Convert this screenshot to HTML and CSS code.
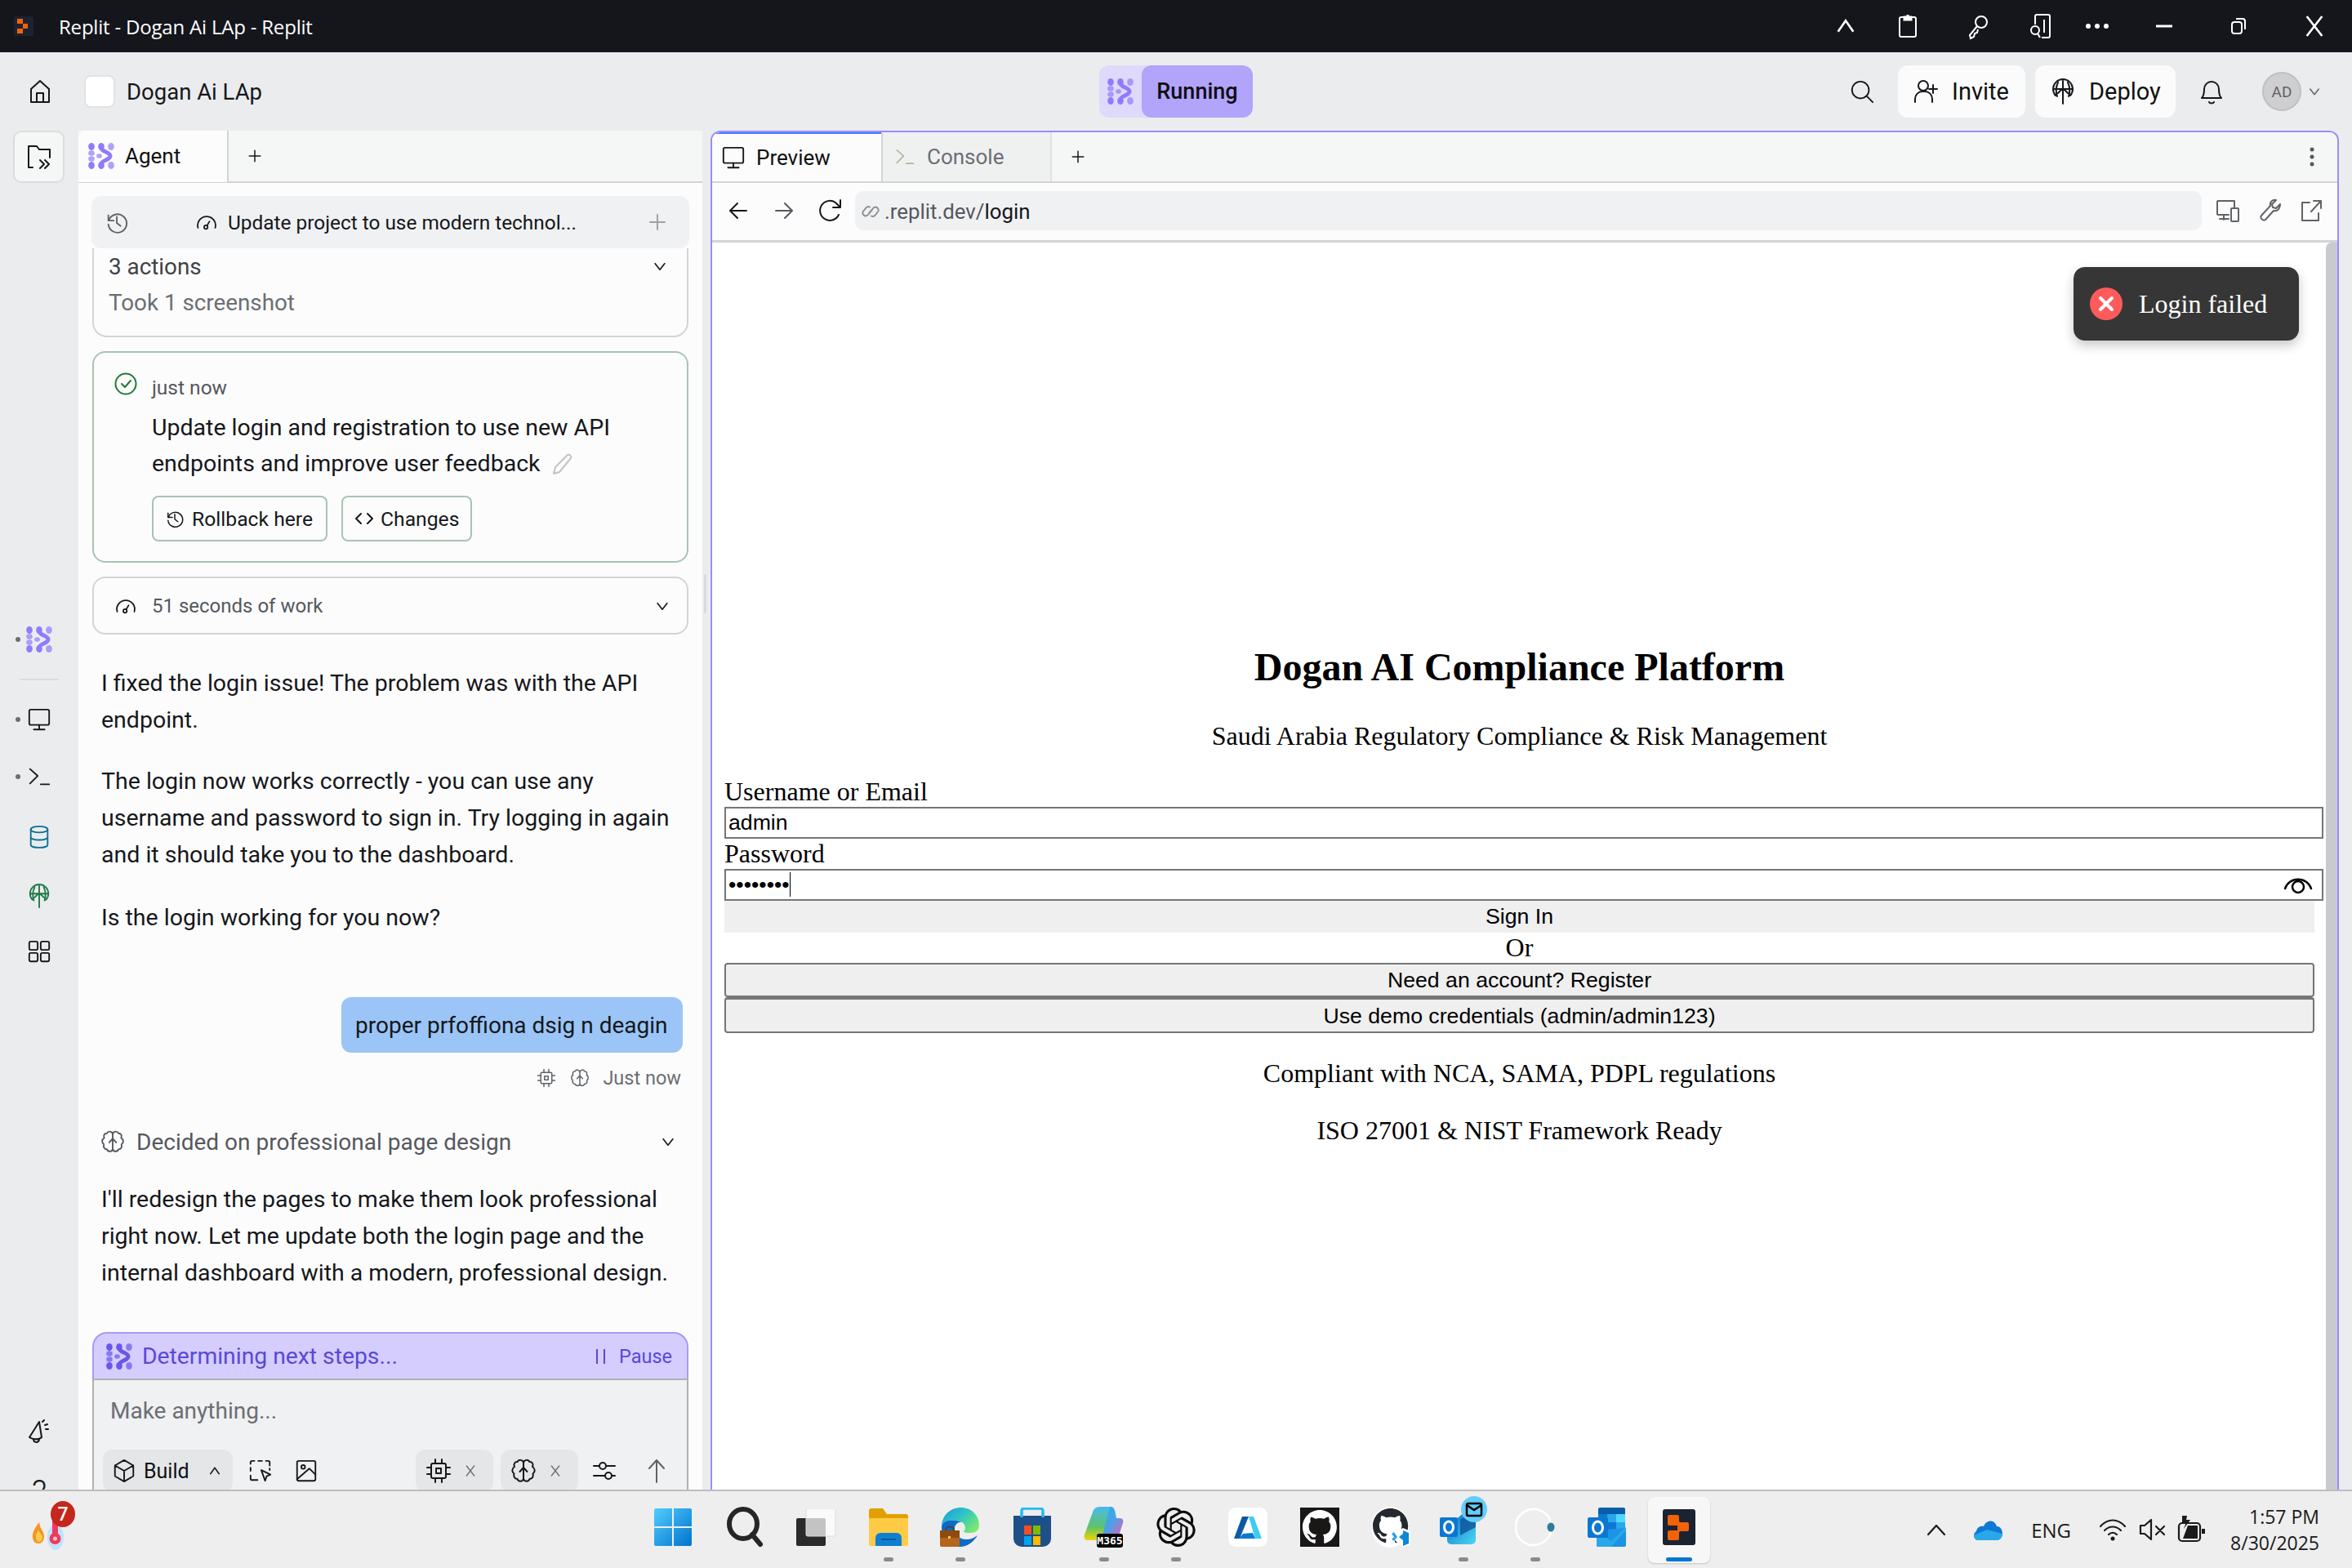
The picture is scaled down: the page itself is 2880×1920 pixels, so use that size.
FILE: index.html
```html
<!DOCTYPE html>
<html lang="en">
<head>
<meta charset="utf-8">
<title>Replit - Dogan Ai LAp - Replit</title>
<link rel="stylesheet" href="styles.css">
</head>
<body>
<svg class="defs" width="0" height="0">
  <defs>
    <symbol id="agent" viewBox="0 0 32 32">
      <ellipse cx="4" cy="4.500" rx="3.800" ry="4.500"/><ellipse cx="16" cy="4.500" rx="3.800" ry="4.500"/><ellipse cx="28" cy="4.500" rx="3.800" ry="4.500" opacity=".7"/>
      <ellipse cx="4" cy="12.500" rx="3.800" ry="3.200" opacity=".7"/><ellipse cx="4" cy="19.500" rx="3.800" ry="3.200" opacity=".7"/>
      <ellipse cx="13.500" cy="16" rx="3.400" ry="2.800" opacity=".7"/>
      <path d="M16 6c0 5 11 5 11 10s-11 5-11 10" fill="none" stroke="currentColor" stroke-width="5"/>
      <ellipse cx="4" cy="27.500" rx="3.800" ry="4.500"/><ellipse cx="16" cy="27.500" rx="3.800" ry="4.500"/><ellipse cx="28" cy="27.500" rx="3.800" ry="4.500" opacity=".7"/>
    </symbol>
    <symbol id="chev" viewBox="0 0 24 24"><path d="M5 8l7 9 7-9"/></symbol>
    <symbol id="chevup" viewBox="0 0 24 24"><path d="M5 17l7-10 7 10"/></symbol>
    <symbol id="plus" viewBox="0 0 24 24"><path d="M12 3v18M3 12h18"/></symbol>
    <symbol id="x" viewBox="0 0 24 24"><path d="M5 3l14 18M19 3L5 21"/></symbol>
    <symbol id="gauge" viewBox="0 0 32 32"><path d="M4 24a12.500 12.500 0 1 1 24 0"/><circle cx="15" cy="23" r="2.500"/><path d="M16.500 21L20 15"/></symbol>
    <symbol id="brain" viewBox="0 0 32 32"><path d="M16 6c-.5-3.500-6-4.500-7.500-1C5 5 3.500 8 5 11c-3.500 2-3.500 6.500-.5 8.500C3.500 23 5 26 8.500 26c1 3.500 6.500 3.500 7.500 0 1 3.500 6.500 3.500 7.500 0 3.500 0 5-3 4-6.500 3-2 3-6.500-.5-8.500 1.500-3 0-6-3.500-6-1.500-3.500-7-2.500-7.500 1z"/><path d="M16 6v20M11.500 17l4.500-5 4.500 5"/></symbol>
    <symbol id="chip" viewBox="0 0 32 32"><rect x="7" y="7" width="18" height="18" rx="2"/><rect x="13" y="13" width="6" height="6"/><path d="M12 2v5M20 2v5M12 25v5M20 25v5M2 12h5M2 20h5M25 12h5M25 20h5"/></symbol>
    <symbol id="monitor" viewBox="0 0 32 32"><rect x="3" y="3" width="26" height="20" rx="2"/><path d="M16 23v6M9 29h14"/></symbol>
    <symbol id="term" viewBox="0 0 32 32"><path d="M4 6l10 9-10 10M18 26h11"/></symbol>
    <symbol id="deploy" viewBox="0 0 32 32"><path d="M7 21a12 12 0 1 1 18 0M16 3v28M4 13h24M10 5c-3 6-3 11-1 17M22 5c3 6 3 11 1 17M10 18l6-6 6 6"/></symbol>
    <symbol id="clock" viewBox="0 0 32 32"><path d="M5 7v7h7"/><path d="M5.500 14A12 12 0 1 1 5 19"/><path d="M16 9v8l5 4"/></symbol>
  </defs>
</svg>

<header class="titlebar">
  <svg class="app-mark" width="24" height="24" viewBox="0 0 24 24"><rect width="24" height="24" rx="3" fill="#1b2232"/><path d="M4 3h7v6h6v6h-6v6H4v-6h7V9H4z" fill="#f26207"/></svg>
  <span class="title-text">Replit - Dogan Ai LAp - Replit</span>
  <div class="win-controls">
    <svg class="win-ico" width="32" height="32"><use href="#chevup"/></svg>
    <svg class="win-ico" width="32" height="32" viewBox="0 0 32 32"><rect x="6" y="5" width="20" height="24" rx="2"/><path d="M12 5h8v3h-8zM16 2v3" stroke-width="3"/></svg>
    <svg class="win-ico" width="32" height="32" viewBox="0 0 32 32"><circle cx="20" cy="11" r="7"/><path d="M15 16L6 27l1 4 4-2 1-4 3-1 1-4"/></svg>
    <svg class="win-ico" width="32" height="32" viewBox="0 0 32 32"><path d="M9 14V4a2 2 0 0 1 2-2h14a2 2 0 0 1 2 2v24a2 2 0 0 1-2 2H17"/><path d="M20 8v16"/><circle cx="9" cy="21" r="5"/><path d="M12 25l3 5"/></svg>
    <svg class="win-ico win-ico--fill" width="32" height="32" viewBox="0 0 32 32"><circle cx="5" cy="16" r="3"/><circle cx="16" cy="16" r="3"/><circle cx="27" cy="16" r="3"/></svg>
    <svg class="win-ico" width="32" height="32" viewBox="0 0 32 32"><path d="M6 16h20" stroke-width="3"/></svg>
    <svg class="win-ico" width="32" height="32" viewBox="0 0 32 32"><rect x="8" y="11" width="12" height="14" rx="3"/><path d="M13 7h8a3 3 0 0 1 3 3v10"/></svg>
    <svg class="win-ico" width="32" height="32"><use href="#x"/></svg>
  </div>
</header>

<nav class="topbar">
  <svg class="ico ico--home" width="32" height="32" viewBox="0 0 32 32"><path d="M5 29V13L16 3l11 10v16z"/><path d="M12 29V18h8v11"/></svg>
  <div class="project-badge"></div>
  <span class="project-name">Dogan Ai LAp</span>
  <div class="run-pill">
    <span class="run-logo"><svg class="agent-mark" width="32" height="32"><use href="#agent"/></svg></span>
    <span class="run-label">Running</span>
  </div>
  <svg class="ico ico--search" width="30" height="30" viewBox="0 0 32 32"><circle cx="14" cy="14" r="11"/><path d="M22 22l8 8"/></svg>
  <button class="top-btn top-btn--invite">
    <svg class="ico" width="32" height="32" viewBox="0 0 32 32"><circle cx="13" cy="9" r="6"/><path d="M3 29v-4a9 9 0 0 1 9-9h3a9 9 0 0 1 9 9v4M25 8v10M20 13h10"/></svg>
    Invite
  </button>
  <button class="top-btn top-btn--deploy">
    <svg class="ico" width="32" height="32"><use href="#deploy"/></svg>
    Deploy
  </button>
  <svg class="ico ico--bell" width="30" height="32" viewBox="0 0 30 32"><path d="M3 24c3-3 3-7 3-11a9 9 0 0 1 18 0c0 4 0 8 3 11z"/><path d="M12 29c1 2 5 2 6 0"/></svg>
  <div class="avatar">AD</div>
  <svg class="ico ico--caret" width="18" height="18"><use href="#chev"/></svg>
</nav>

<div class="workspace">
  <aside class="rail">
    <div class="rail-tool"><svg class="ico" width="32" height="32" viewBox="0 0 32 32"><path d="M8 29H3V3h10l3 4h13v10"/><path d="M17 20l5 5-5 5M23 20l5 5-5 5"/></svg></div>
    <div class="rail-item rail-item--dot rail-item--agent"><svg class="agent-mark" width="32" height="32"><use href="#agent"/></svg></div>
    <div class="rail-sep"></div>
    <div class="rail-item rail-item--dot rail-item--monitor"><svg class="ico" width="30" height="30"><use href="#monitor"/></svg></div>
    <div class="rail-item rail-item--dot rail-item--term"><svg class="ico" width="30" height="30"><use href="#term"/></svg></div>
    <div class="rail-item rail-item--teal"><svg class="ico" width="28" height="30" viewBox="0 0 28 32"><ellipse cx="14" cy="6" rx="11" ry="4"/><path d="M3 6v20c0 5 22 5 22 0V6M3 16c0 5 22 5 22 0"/></svg></div>
    <div class="rail-item rail-item--green"><svg class="ico" width="30" height="30"><use href="#deploy"/></svg></div>
    <div class="rail-item rail-item--grid"><svg class="ico" width="30" height="30" viewBox="0 0 32 32"><rect x="3" y="3" width="11" height="11" rx="2"/><rect x="18" y="3" width="11" height="11" rx="2"/><rect x="3" y="18" width="11" height="11" rx="2"/><rect x="18" y="18" width="11" height="11" rx="2"/></svg></div>
    <div class="rail-item rail-item--notice"><svg class="ico" width="32" height="32" viewBox="0 0 32 32"><path d="M16 4L4 23c4 3 12 3 15 0z"/><path d="M9 25c0 5 6 5 7 1M20 4l2-2M23 8l3-1M24 13l3 0"/></svg></div>
    <div class="rail-item rail-item--help"><span>?</span></div>
  </aside>

  <section class="agent">
    <div class="tabs">
      <div class="tab tab--agent"><svg class="agent-mark" width="32" height="32"><use href="#agent"/></svg>Agent</div>
      <svg class="ico ico--newtab" width="18" height="18"><use href="#plus"/></svg>
    </div>
    <div class="agent-body">
      <div class="thread-head">
        <svg class="ico ico--grey" width="30" height="30"><use href="#clock"/></svg>
        <svg class="ico ico--gauge" width="28" height="28"><use href="#gauge"/></svg>
        <span class="thread-title">Update project to use modern technol...</span>
        <svg class="ico ico--faint" width="24" height="24"><use href="#plus"/></svg>
      </div>
      <div class="card card--actions">
        <div class="actions-row"><span>3 actions</span><svg class="ico" width="20" height="20"><use href="#chev"/></svg></div>
        <div class="actions-sub">Took 1 screenshot</div>
      </div>
      <div class="card card--check">
        <div class="check-time">
          <svg class="check-ico" width="28" height="28" viewBox="0 0 28 28"><circle cx="14" cy="14" r="12.500"/><path d="M9 14l4 4 7-8"/></svg>
          just now
        </div>
        <div class="check-msg">Update login and registration to use new API<br>endpoints and improve user feedback <svg class="ico ico--pencil" width="28" height="28" viewBox="0 0 28 28"><path d="M3 26l2-8L20 3c2-1 5 1 4 4L10 24z"/></svg></div>
        <div class="check-btns">
          <button class="ghost-btn"><svg class="ico" width="24" height="24"><use href="#clock"/></svg>Rollback here</button>
          <button class="ghost-btn ghost-btn--code"><svg class="ico" width="24" height="24" viewBox="0 0 24 24"><path d="M8 6l-6 6 6 6M16 6l6 6-6 6"/></svg>Changes</button>
        </div>
      </div>
      <div class="card card--work">
        <svg class="ico" width="28" height="28"><use href="#gauge"/></svg>
        <span class="work-text">51 seconds of work</span>
        <svg class="ico ico--end" width="20" height="20"><use href="#chev"/></svg>
      </div>
      <p class="msg msg--first">I fixed the login issue! The problem was with the API<br>endpoint.</p>
      <p class="msg">The login now works correctly - you can use any<br>username and password to sign in. Try logging in again<br>and it should take you to the dashboard.</p>
      <p class="msg msg--ask">Is the login working for you now?</p>
      <div class="bubble-row"><div class="bubble">proper prfoffiona dsig n deagin</div></div>
      <div class="meta">
        <svg class="ico ico--meta" width="24" height="24"><use href="#chip"/></svg>
        <svg class="ico ico--meta" width="24" height="24"><use href="#brain"/></svg>
        <span>Just now</span>
      </div>
      <div class="decided">
        <svg class="ico ico--brain2" width="30" height="30"><use href="#brain"/></svg>
        <span>Decided on professional page design</span>
        <svg class="ico ico--end" width="20" height="20"><use href="#chev"/></svg>
      </div>
      <p class="msg msg--plan">I'll redesign the pages to make them look professional<br>right now. Let me update both the login page and the<br>internal dashboard with a modern, professional design.</p>
      <div class="composer">
        <div class="status">
          <svg class="agent-mark agent-mark--deep" width="32" height="32"><use href="#agent"/></svg>
          <span class="status-text">Determining next steps...</span>
          <span class="pause"><i class="pause-bars"></i>Pause</span>
        </div>
        <div class="input-box">
          <div class="placeholder">Make anything...</div>
          <div class="input-tools">
            <div class="pill pill--build">
              <svg class="ico" width="28" height="30" viewBox="0 0 28 32"><path d="M14 2l12 7v14l-12 7-12-7V9zM2 9l12 7 12-7M14 16v14"/></svg>
              <span>Build</span>
              <svg class="ico ico--up" width="18" height="18"><use href="#chevup"/></svg>
            </div>
            <svg class="ico ico--tool ico--select" width="30" height="30" viewBox="0 0 32 32"><path d="M12 28H5a2 2 0 0 1-2-2v-4M3 16v-4M3 7V5a2 2 0 0 1 2-2h3M13 3h5M23 3h3a2 2 0 0 1 2 2v4M28 13v2"/><path class="solid" d="M17 15l12 6-5 2-2 6z"/></svg>
            <svg class="ico ico--tool" width="28" height="30" viewBox="0 0 28 32"><rect x="2" y="3" width="24" height="26" rx="2"/><circle cx="10" cy="11" r="2.500"/><path d="M2 27l16-14 8 8"/></svg>
            <div class="pill pill--chip"><svg class="ico" width="32" height="32"><use href="#chip"/></svg><svg class="ico ico--closex" width="16" height="18"><use href="#x"/></svg></div>
            <div class="pill pill--brain"><svg class="ico" width="32" height="32"><use href="#brain"/></svg><svg class="ico ico--closex" width="16" height="18"><use href="#x"/></svg></div>
            <svg class="ico ico--sliders" width="28" height="28" viewBox="0 0 28 28"><path d="M1 8h7M16 8h11M1 20h14M23 20h4"/><circle cx="12" cy="8" r="4"/><circle cx="19" cy="20" r="4"/></svg>
            <svg class="ico ico--send" width="24" height="32" viewBox="0 0 24 32"><path d="M12 30V3M3 13l9-10 9 10"/></svg>
          </div>
        </div>
      </div>
    </div>
  </section>

  <div class="splitter"><i></i></div>

  <section class="main">
    <div class="tabs tabs--main">
      <div class="tab tab--preview"><svg class="ico" width="30" height="30"><use href="#monitor"/></svg>Preview</div>
      <div class="tab tab--console"><svg class="ico ico--dim" width="26" height="26"><use href="#term"/></svg>Console</div>
      <svg class="ico ico--newtab2" width="18" height="18"><use href="#plus"/></svg>
      <svg class="ico-kebab" width="6" height="24" viewBox="0 0 6 24"><circle cx="3" cy="3" r="2.500"/><circle cx="3" cy="12" r="2.500"/><circle cx="3" cy="21" r="2.500"/></svg>
    </div>
    <div class="url-row">
      <svg class="ico ico--nav" width="24" height="24" viewBox="0 0 24 24"><path d="M22 12H3M11 3l-9 9 9 9"/></svg>
      <svg class="ico ico--nav2" width="24" height="24" viewBox="0 0 24 24"><path d="M2 12h19M13 3l9 9-9 9"/></svg>
      <svg class="ico ico--nav3" width="30" height="30" viewBox="0 0 30 30"><path d="M25 20A12 12 0 1 1 21 5l5 5M27 2v9h-9"/></svg>
      <div class="url-box">
        <svg class="ico ico--link" width="22" height="24" viewBox="0 0 24 24"><path d="M10 14l6-7a4 4 0 0 1 6 5l-4 5a4 4 0 0 1-5 1M14 10l-6 7a4 4 0 0 1-6-5l4-5a4 4 0 0 1 5-1"/></svg>
        <span class="url-host">.replit.dev/</span><span class="url-path">login</span>
      </div>
      <svg class="ico ico--grey ico--urlt" width="30" height="28" viewBox="0 0 30 28"><path d="M16 19H3a1 1 0 0 1-1-1V3a1 1 0 0 1 1-1h20v9M10 19v6M5 24h11"/><rect x="19" y="11" width="9" height="16" rx="1"/></svg>
      <svg class="ico ico--grey ico--urlt2" width="28" height="28" viewBox="0 0 28 28"><path d="M26 6l-5 5-4-1-1-4 5-5c-4-1-8 2-7 7L3 20c-2 3 2 7 5 5l10-11c5 1 8-3 8-8z"/></svg>
      <svg class="ico ico--grey ico--urlt3" width="28" height="28" viewBox="0 0 28 28"><path d="M12 4H3v22h20v-9M14 15L26 2M17 2h9v9"/></svg>
    </div>
    <div class="viewport">
      <div class="page">
        <h1 class="page-title">Dogan AI Compliance Platform</h1>
        <p class="page-sub">Saudi Arabia Regulatory Compliance &amp; Risk Management</p>
        <form class="login">
          <div class="label">Username or Email</div>
          <div class="field">admin</div>
          <div class="label">Password</div>
          <div class="field field--pw">••••••••<i class="caret"></i>
            <svg class="eye" width="36" height="26" viewBox="0 0 36 26"><path d="M2 18a17 17 0 0 1 32 0"/><ellipse cx="18" cy="16" rx="7" ry="7"/></svg>
          </div>
          <button type="button" class="btn btn--primary">Sign In</button>
          <div class="or">Or</div>
          <button type="button" class="btn btn--outline">Need an account? Register</button>
          <button type="button" class="btn btn--outline btn--demo">Use demo credentials (admin/admin123)</button>
        </form>
        <p class="note note--first">Compliant with NCA, SAMA, PDPL regulations</p>
        <p class="note">ISO 27001 &amp; NIST Framework Ready</p>
      </div>
      <div class="toast">
        <svg class="toast-ico" width="40" height="40" viewBox="0 0 40 40"><circle cx="20" cy="20" r="20" fill="#ff5b5b"/><path d="M13 13l14 14M27 13L13 27" stroke="#fff" stroke-width="4" stroke-linecap="round"/></svg>
        <span>Login failed</span>
      </div>
      <div class="scrollbar"></div>
    </div>
  </section>
</div>

<footer class="taskbar">
  <div class="widget">
    <svg width="60" height="62" viewBox="0 0 60 62">
      <ellipse cx="30" cy="44" rx="10" ry="16" fill="#bfe3fb"/>
      <rect x="26" y="14" width="7" height="30" rx="3" fill="#ef3a5d"/><circle cx="29.500" cy="46" r="7" fill="#ef3a5d"/><circle cx="29.500" cy="46" r="2.500" fill="#ffc0cb"/>
      <path d="M10 26c-6 8-8 12-8 17 0 6 3 9 7 9s7-3 7-9c0-6-5-8-6-17z" fill="#f7941d"/><path d="M9 36c-3 4-3 6-3 8 0 3 2 6 4 6s4-3 4-6c0-3-3-4-5-8z" fill="#ffcd4d"/>
      <ellipse cx="39" cy="16" rx="15" ry="16" fill="#c4271c"/>
      <text x="39" y="24" class="badge-num">7</text>
    </svg>
  </div>
  <div class="dock">
    <div class="dock-item">
      <svg width="46" height="46" viewBox="0 0 46 46"><defs><linearGradient id="win" x1="0" y1="0" x2="1" y2="1"><stop offset="0" stop-color="#52cdfb"/><stop offset="1" stop-color="#0073cf"/></linearGradient></defs><path fill="url(#win)" d="M2 0h20v22H0V2a2 2 0 0 1 2-2zM24 0h20a2 2 0 0 1 2 2v20H24zM0 24h22v22H2a2 2 0 0 1-2-2zM24 24h22v20a2 2 0 0 1-2 2H24z"/></svg>
    </div>
    <div class="dock-item">
      <svg width="46" height="50" viewBox="0 0 46 50"><ellipse cx="21" cy="21" rx="17" ry="18" fill="none" stroke="#262626" stroke-width="6"/><path d="M32 34l10 12" stroke="#262626" stroke-width="6" stroke-linecap="round"/></svg>
    </div>
    <div class="dock-item">
      <svg width="50" height="46" viewBox="0 0 50 46"><rect x="0" y="12" width="36" height="34" rx="2" fill="#2a2a2a"/><rect x="12" y="0" width="36" height="34" rx="2" fill="#fff" fill-opacity=".72" stroke="#ddd"/></svg>
    </div>
    <div class="dock-item dock-item--open">
      <svg width="48" height="46" viewBox="0 0 48 46"><path d="M0 3a3 3 0 0 1 3-3h14l5 7h23a3 3 0 0 1 3 3v4H0z" fill="#e0a100"/><path d="M0 12h48v32a2 2 0 0 1-2 2H2a2 2 0 0 1-2-2z" fill="#ffcb47" /><path d="M8 46V36a6 6 0 0 1 6-6h20a6 6 0 0 1 6 6v10z" fill="#0f7fd1"/><path d="M15 38h18" stroke="#055b9e" stroke-width="2"/></svg>
    </div>
    <div class="dock-item dock-item--open">
      <svg width="50" height="48" viewBox="0 0 50 48"><defs><linearGradient id="edge" x1="0" y1="0" x2="1" y2=".7"><stop offset="0" stop-color="#1a9bd8"/><stop offset=".5" stop-color="#2cc3c7"/><stop offset="1" stop-color="#7bea6b"/></linearGradient></defs><path d="M2 24C2 10 12 0 26 0c12 0 22 9 22 22 0 6-5 9-10 9-5 0-8 0-9-2 3-2 3-8-2-11C18 14 2 14 2 24z" fill="url(#edge)"/><path d="M2 24c0-10 16-10 25-6-4-1-9 2-9 8 0 7 6 13 14 13 6 0 10-2 14-5-5 8-12 14-22 14C12 48 2 38 2 24z" fill="#0c6bc5"/><rect x="0" y="28" width="24" height="20" rx="2" fill="#b5661b"/><rect x="0" y="28" width="24" height="9" fill="#8d4b10"/><rect x="10" y="35" width="3" height="3" fill="#ffc83d"/><path d="M7 28c0-6 10-6 10 0" fill="none" stroke="#444" stroke-width="2"/></svg>
    </div>
    <div class="dock-item">
      <svg width="46" height="48" viewBox="0 0 46 48"><path d="M0 10h46v28a10 10 0 0 1-10 10H10A10 10 0 0 1 0 38z" fill="#1e4f88"/><path d="M10 12V4a3 3 0 0 1 3-3h20a3 3 0 0 1 3 3v8" fill="none" stroke="#25b9f5" stroke-width="3.500"/><rect x="13" y="22" width="9" height="11" fill="#f25022"/><rect x="24" y="22" width="9" height="11" fill="#7fba00"/><rect x="13" y="35" width="9" height="11" fill="#00a4ef"/><rect x="24" y="35" width="9" height="11" fill="#ffb900"/></svg>
    </div>
    <div class="dock-item dock-item--open">
      <svg width="50" height="50" viewBox="0 0 50 50"><defs><linearGradient id="cop" x1="0" y1="0" x2="1" y2="1"><stop offset="0" stop-color="#18b6e6"/><stop offset=".5" stop-color="#4f9fe8"/><stop offset="1" stop-color="#e85db0"/></linearGradient><linearGradient id="cop2" x1="0" y1="0" x2="0" y2="1"><stop offset="0" stop-color="#4bb9ee"/><stop offset=".6" stop-color="#5cc46a"/><stop offset="1" stop-color="#f4d400"/></linearGradient></defs><path d="M12 4c2-3 4-4 8-4h14l-9 34c-1 4-4 7-8 7H4c-3 0-4-3-3-7z" fill="url(#cop2)"/><path d="M32 0c5 0 6 2 8 14h4c4 0 5 3 4 6l-6 18H22l8-30z" fill="url(#cop)"/><rect x="16" y="33" width="32" height="17" rx="3" fill="#000"/><text x="32" y="46" class="m365">M365</text></svg>
    </div>
    <div class="dock-item dock-item--open">
      <svg width="48" height="48" viewBox="0 0 24 24" fill="#0c0c0c"><path d="M22.2819 9.8211a5.9847 5.9847 0 0 0-.5157-4.9108 6.0462 6.0462 0 0 0-6.5098-2.9A6.0651 6.0651 0 0 0 4.9807 4.1818a5.9847 5.9847 0 0 0-3.9977 2.9 6.0462 6.0462 0 0 0 .7427 7.0966 5.98 5.98 0 0 0 .511 4.9107 6.051 6.051 0 0 0 6.5146 2.9001A5.9847 5.9847 0 0 0 13.2599 24a6.0557 6.0557 0 0 0 5.7718-4.2058 5.9894 5.9894 0 0 0 3.9977-2.9001 6.0557 6.0557 0 0 0-.7475-7.0729zm-9.022 12.6081a4.4755 4.4755 0 0 1-2.8764-1.0408l.1419-.0804 4.7783-2.7582a.7948.7948 0 0 0 .3927-.6813v-6.7369l2.02 1.1686a.071.071 0 0 1 .038.052v5.5826a4.504 4.504 0 0 1-4.4945 4.4944zm-9.6607-4.1254a4.4708 4.4708 0 0 1-.5346-3.0137l.142.0852 4.783 2.7582a.7712.7712 0 0 0 .7806 0l5.8428-3.3685v2.3324a.0804.0804 0 0 1-.0332.0615L9.74 19.9502a4.4992 4.4992 0 0 1-6.1408-1.6464zM2.3408 7.8956a4.485 4.485 0 0 1 2.3655-1.9728V11.6a.7664.7664 0 0 0 .3879.6765l5.8144 3.3543-2.0201 1.1685a.0757.0757 0 0 1-.071 0l-4.8303-2.7865A4.504 4.504 0 0 1 2.3408 7.872zm16.5963 3.8558L13.1038 8.364 15.1192 7.2a.0757.0757 0 0 1 .071 0l4.8303 2.7913a4.4944 4.4944 0 0 1-.6765 8.1042v-5.6772a.79.79 0 0 0-.407-.667zm2.0107-3.0231l-.142-.0852-4.7735-2.7818a.7759.7759 0 0 0-.7854 0L9.409 9.2297V6.8974a.0662.0662 0 0 1 .0284-.0615l4.8303-2.7866a4.4992 4.4992 0 0 1 6.6802 4.66zM8.3065 12.863l-2.02-1.1638a.0804.0804 0 0 1-.038-.0567V6.0742a4.4992 4.4992 0 0 1 7.3757-3.4537l-.142.0805L8.704 5.459a.7948.7948 0 0 0-.3927.6813zm1.0976-2.3654l2.602-1.4998 2.6069 1.4998v2.9994l-2.5974 1.4997-2.6067-1.4997Z"/></svg>
    </div>
    <div class="dock-item">
      <svg width="48" height="48" viewBox="0 0 48 48"><rect width="48" height="48" rx="9" fill="#fff"/><defs><linearGradient id="az" x1="0" y1="0" x2="1" y2="1"><stop offset="0" stop-color="#114a8b"/><stop offset="1" stop-color="#0669bc"/></linearGradient></defs><path d="M17 11h8L14 38H7z" fill="url(#az)"/><path d="M25 11h6l10 27H33z" fill="#3ccbf4"/><path d="M18 32l12-1 3 7H13z" fill="#0a7ad1"/></svg>
    </div>
    <div class="dock-item">
      <svg width="48" height="48" viewBox="0 0 48 48"><rect width="48" height="48" fill="#1a1717"/><g transform="translate(3 3) scale(2.620)"><path class="gh-disc" d="M8 0C3.580 0 0 3.580 0 8c0 3.540 2.290 6.530 5.470 7.590.400.070.550-.170.550-.380 0-.190-.010-.820-.010-1.490-2.010.370-2.530-.490-2.690-.940-.090-.230-.480-.940-.820-1.130-.280-.150-.680-.520-.010-.530.630-.010 1.080.580 1.230.820.720 1.210 1.870.870 2.330.660.070-.520.280-.870.510-1.070-1.780-.200-3.640-.890-3.640-3.950 0-.870.310-1.590.820-2.150-.080-.200-.360-1.020.080-2.120 0 0 .670-.210 2.200.820.640-.180 1.320-.270 2-.270.680 0 1.360.090 2 .270 1.530-1.040 2.200-.820 2.200-.820.440 1.100.160 1.920.080 2.120.510.560.820 1.270.820 2.150 0 3.070-1.870 3.750-3.650 3.950.290.250.540.730.540 1.480 0 1.070-.010 1.930-.010 2.200 0 .210.150.460.550.380A8.013 8.013 0 0016 8c0-4.420-3.580-8-8-8z"/></g></svg>
    </div>
    <div class="dock-item">
      <svg width="48" height="50" viewBox="0 0 48 50"><ellipse cx="22" cy="25" rx="23" ry="25" fill="#fff"/><g transform="translate(1 2) scale(2.700)"><path class="gh-dark" d="M8 0C3.580 0 0 3.580 0 8c0 3.540 2.290 6.530 5.470 7.590.400.070.550-.170.550-.380 0-.190-.010-.820-.010-1.490-2.010.370-2.530-.490-2.690-.940-.090-.230-.480-.940-.820-1.130-.280-.150-.680-.520-.010-.530.630-.010 1.080.580 1.230.820.720 1.210 1.870.870 2.330.660.070-.520.280-.870.510-1.070-1.780-.200-3.640-.890-3.640-3.950 0-.870.310-1.590.820-2.150-.080-.200-.360-1.020.080-2.120 0 0 .670-.210 2.200.820.640-.180 1.320-.270 2-.270.680 0 1.360.090 2 .270 1.530-1.040 2.200-.820 2.200-.820.440 1.100.160 1.920.080 2.120.510.560.820 1.270.820 2.150 0 3.070-1.870 3.750-3.650 3.950.290.250.540.730.540 1.480 0 1.070-.010 1.930-.010 2.200 0 .210.150.460.550.380A8.013 8.013 0 0016 8c0-4.420-3.580-8-8-8z"/></g><path d="M38 26l9 4v16l-9 4-10-9-3 3-5-3 6-5-6-5 5-3 3 3z" fill="#fff"/><path d="M38 29l7 3v13l-7 3V41l-5-4 5-4z" fill="#0d88d6"/><path d="M24 33l3-2 4 6-4 5-3-2 3-3z" fill="#2aa3e6"/></svg>
    </div>
    <div class="dock-item dock-item--open">
      <svg width="58" height="66" viewBox="0 0 58 66" class="dock-tall"><defs><linearGradient id="olk" x1="0" y1="0" x2="1" y2="1"><stop offset="0" stop-color="#0c6cc0"/><stop offset="1" stop-color="#4cd7f7"/></linearGradient></defs><path d="M9 40L32 20h12v36a5 5 0 0 1-5 5H14a5 5 0 0 1-5-5z" fill="url(#olk)"/><path d="M25 30l19-8v18L25 50z" fill="#0a4d94" opacity=".75"/><rect x="0" y="28" width="22" height="24" rx="2" fill="#0c77d2"/><ellipse cx="11" cy="40" rx="5.500" ry="7" fill="none" stroke="#fff" stroke-width="3"/><circle cx="42" cy="18" r="16" fill="#63cdfb"/><rect x="33" y="11" width="18" height="15" rx="2" fill="none" stroke="#000" stroke-width="2.500"/><path d="M33 13l9 6 9-6" fill="none" stroke="#000" stroke-width="2.500"/></svg>
    </div>
    <div class="dock-item dock-item--open">
      <svg width="50" height="50" viewBox="0 0 50 50"><path d="M44 19A22 22 0 1 0 44 31" fill="none" stroke="#fff" stroke-width="2.500"/><ellipse cx="44" cy="25" rx="4.500" ry="5.500" fill="#2c7d9c"/></svg>
    </div>
    <div class="dock-item">
      <svg width="48" height="48" viewBox="0 0 48 48"><rect x="13" y="0" width="33" height="28" rx="2" fill="#0a5ea8"/><rect x="13" y="8" width="11" height="10" fill="#0f78d4"/><rect x="24" y="8" width="11" height="10" fill="#28a8ea"/><rect x="35" y="8" width="11" height="10" fill="#50d9ff"/><rect x="24" y="18" width="11" height="10" fill="#0f78d4"/><rect x="35" y="18" width="11" height="10" fill="#28a8ea"/><path d="M11 28l36-3v21a2 2 0 0 1-2 2H13a2 2 0 0 1-2-2z" fill="#1c93e4"/><path d="M11 28l18 13 18-17v4L29 48H13a2 2 0 0 1-2-2z" fill="#28a8ea"/><rect x="0" y="12" width="25" height="25" rx="2" fill="#0c77d2"/><ellipse cx="12.500" cy="24.500" rx="6" ry="7.500" fill="none" stroke="#fff" stroke-width="3"/></svg>
    </div>
    <div class="dock-item dock-item--active">
      <svg width="40" height="44" viewBox="0 0 40 44"><rect width="40" height="44" rx="3" fill="#1b2232"/><path d="M8 7h10q2 0 2 2v5q0 2 2 2h8q2 0 2 2v7q0 2-2 2h-8q-2 0-2 2v7q0 2-2 2H8q-2 0-2-2v-8q0-2 2-2h10v-6H8q-2 0-2-2V9q0-2 2-2z" fill="#f26207"/></svg>
    </div>
  </div>
  <div class="tray">
    <svg class="tray-ico" width="26" height="20" viewBox="0 0 26 20"><path d="M3 16L13 5l10 11"/></svg>
    <svg class="tray-cloud" width="36" height="26" viewBox="0 0 36 26"><path d="M6 26a6 6 0 0 1-2-11C5 10 9 8 13 9 16 1 26 0 29 9c5 0 7 5 7 9 0 5-4 8-7 8z" fill="#0f78d4"/><path d="M1 20l16-7 19 5c0 5-4 8-7 8H6c-3 0-5-3-5-6z" fill="#28a8ea"/></svg>
    <span class="tray-lang">ENG</span>
    <svg class="tray-ico tray-wifi" width="32" height="30" viewBox="0 0 32 30"><path d="M1 11c9-10 21-10 30 0M6 16c6-6 14-6 20 0M11 21c3-3 7-3 10 0"/><circle class="tray-dot" cx="16" cy="26" r="2.500"/></svg>
    <svg class="tray-ico tray-vol" width="32" height="30" viewBox="0 0 32 30"><path d="M1 10h5l8-7v24l-8-7H1zM20 11l10 10M30 11L20 21"/></svg>
    <svg class="tray-ico tray-batt" width="34" height="34" viewBox="0 0 34 34"><rect x="2" y="9" width="26" height="22" rx="4"/><path class="tray-fill" d="M7 28l6-16h12v16z"/><path class="tray-fill" d="M30 16h4v6h-4zM6 0v8h5L8 16l8-11h-5l1-5z"/></svg>
    <div class="clock"><div>1:57 PM</div><div>8/30/2025</div></div>
  </div>
</footer>
</body>
</html>
```
FILE: styles.css
```css
* { box-sizing: border-box; }
html, body { margin: 0; padding: 0; }
body {
  width: 2880px; height: 1920px; overflow: hidden;
  display: flex; flex-direction: column;
  background: #ebecee; color: #111;
  font-family: Roboto, "Noto Sans", sans-serif;
  font-size: 28.5px;
}
.defs { position: absolute; }
button { font-family: inherit; }
p { margin: 0; }

.ico { fill: none; stroke: #15171b; stroke-width: 2; stroke-linecap: round; stroke-linejoin: round; flex: none; overflow: visible; }
.ico--grey { stroke: #5f6368; }
.ico--faint { stroke: #9ea1a6; }
.ico--dim { stroke: #b8b2a2; }
.ico--meta { stroke: #5f6368; }
.ico--brain2 { stroke: #55585e; }
.agent-mark { fill: #8f7bff; color: #8f7bff; flex: none; }
.agent-mark--deep { fill: #6a56ea; color: #6a56ea; }

/* title bar */
.titlebar { height: 64px; flex: none; background: #14161c; display: flex; align-items: center; padding-left: 17px; color: #fff; }
.title-text { margin-left: 31px; font-size: 24px; color: #fff; font-family: "Open Sans", sans-serif; letter-spacing: -.2px; }
.app-mark { flex: none; }
.win-controls { margin-left: auto; padding-right: 30px; display: grid; grid-template-columns: 76px 86px 77px 69px 82px 91px 93px 32px; align-items: center; }
.win-ico { fill: none; stroke: #fff; stroke-width: 2; overflow: visible; }
.win-ico--fill { fill: #fff; stroke: none; }

/* top bar */
.topbar { height: 96px; flex: none; display: flex; align-items: center; padding-left: 33px; }
.ico--home { margin-right: 38px; }
.project-badge { width: 38px; height: 40px; background: #fff; border: 2px solid #e2e3e5; border-radius: 8px; }
.project-name { margin-left: 14px; font-size: 27.500px; color: #16181c; width: 1191px; white-space: nowrap; }
.run-pill { width: 188px; height: 64px; display: flex; border-radius: 12px; background: #dfd9fb; overflow: hidden; }
.run-logo { width: 52px; display: flex; align-items: center; justify-content: center; }
.run-label { flex: 1; background: #b2a3fb; border-radius: 12px; display: flex; align-items: center; justify-content: center; font-weight: 500; font-size: 27px; color: #0e0e14; }
.ico--search { margin-left: 731px; margin-right: 29px; }
.top-btn { height: 64px; background: #fbfbfc; border: 0; border-radius: 12px; display: flex; align-items: center; font-size: 29px; color: #111; padding: 0; }
.top-btn--invite { width: 156px; padding-left: 18px; gap: 16px; }
.top-btn--deploy { width: 172px; margin-left: 12px; padding-left: 18px; gap: 16px; }
.ico--bell { margin-left: 29px; }
.avatar { margin-left: 47px; width: 48px; height: 48px; border-radius: 50%; background: #cfcfd2; border: 2px solid #bfc0c4; color: #5f6166; font-size: 19px; display: flex; align-items: center; justify-content: center; }
.ico--caret { margin-left: 7px; stroke: #5f6368; }

/* workspace */
.workspace { height: 1664px; flex: none; display: flex; overflow: hidden; }
.rail { width: 96px; flex: none; display: flex; flex-direction: column; align-items: center; }
.rail-tool { width: 63px; height: 64px; margin-left: -1px; flex: none; background: #f5f7f6; border: 2px solid #dcdde0; border-radius: 10px; display: flex; align-items: center; justify-content: center; }
.rail-item { position: relative; height: 40px; width: 40px; flex: none; display: flex; align-items: center; justify-content: center; }
.rail-item--dot::before { content: ""; position: absolute; left: -9px; top: 17px; width: 6px; height: 6px; border-radius: 50%; background: #6b6e74; }
.rail-item--agent { margin-top: 539px; }
.rail-sep { width: 48px; height: 2px; flex: none; background: #dcdde0; margin-top: 28px; }
.rail-item--monitor { margin-top: 28px; }
.rail-item--term { margin-top: 30px; }
.rail-item--teal { margin-top: 34px; }
.rail-item--teal .ico { stroke: #0e6f92; }
.rail-item--green { margin-top: 32px; }
.rail-item--green .ico { stroke: #1f7a4a; }
.rail-item--grid { margin-top: 28px; }
.rail-item--notice { margin-top: 548px; }
.rail-item--help { margin-top: 34px; font-size: 40px; color: #15171b; font-weight: 300; }

/* tabs */
.tabs { height: 64px; flex: none; display: flex; align-items: center; background: #f5f7f6; border-bottom: 2px solid #d3d4d6; }
.tab { height: 64px; display: flex; align-items: center; font-size: 26px; background: #fcfcfc; }
.tab--agent { width: 184px; padding-left: 12px; gap: 13px; border-right: 2px solid #d3d4d6; border-radius: 12px 0 0 0; }
.ico--newtab { margin-left: 23px; }

/* agent panel */
.agent { width: 764px; flex: none; display: flex; flex-direction: column; background: #fcfcfc; border-radius: 12px 12px 0 0; }
.agent-body { padding: 16px 16px 0; flex: 1; overflow: hidden; }
.thread-head { height: 64px; background: #f0f1f3; border-radius: 12px; display: flex; align-items: center; padding-left: 16px; }
.ico--gauge { margin-left: 81px; }
.thread-title { margin-left: 12px; font-size: 24.400px; color: #15171b; white-space: nowrap; width: 514px; }
.card { border: 2px solid #d3d4d6; border-radius: 16px; margin-left: 1px; margin-right: 1px; background: #fcfcfc; }
.card--actions { border-top: 0; border-radius: 0 0 18px 18px; height: 109px; padding: 0 18px; font-size: 27.800px; }
.actions-row { display: flex; justify-content: space-between; align-items: center; height: 44px; padding-right: 5px; color: #3f4248; }
.actions-sub { height: 44px; line-height: 44px; margin-top: 1px; color: #6b6e74; }
.card--check { margin-top: 17px; height: 259px; border-color: #a9c3b3; padding: 27px 0 0 71px; position: relative; }
.check-time { height: 30px; display: flex; align-items: center; font-size: 24.500px; color: #55585e; position: relative; }
.check-ico { position: absolute; left: -46px; top: -3px; fill: none; stroke: #1e7a33; stroke-width: 2; stroke-linecap: round; stroke-linejoin: round; }
.check-msg { margin-top: 13px; line-height: 44px; color: #15171b; white-space: nowrap; }
.ico--pencil { stroke: #c2c3c6; vertical-align: -5px; margin-left: 6px; }
.check-btns { display: flex; gap: 17px; margin-top: 17px; }
.ghost-btn { height: 56px; width: 215px; background: #fcfcfc; border: 2px solid #a9c3b3; border-radius: 8px; display: flex; align-items: center; padding: 0 0 0 14px; gap: 9px; font-size: 24.700px; color: #15171b; }
.ghost-btn--code { width: 160px; gap: 8px; padding-left: 14px; }
.card--work { margin-top: 17px; height: 71px; display: flex; align-items: center; padding: 0 20px 0 25px; color: #55585e; font-size: 24px; }
.work-text { margin-left: 18px; }
.ico--end { margin-left: auto; }
.msg { padding-left: 12px; line-height: 45px; color: #15171b; margin-top: 30px; white-space: nowrap; }
.msg--first { margin-top: 37px; }
.msg--ask { margin-top: 32px; }
.msg--plan { margin-top: 28px; }
.bubble-row { display: flex; justify-content: flex-end; margin-top: 75px; padding-right: 8px; }
.bubble { width: 418px; height: 68px; background: #9ac5f6; border-radius: 12px; display: flex; align-items: center; padding-left: 17px; color: #15171b; white-space: nowrap; font-size: 28px; }
.meta { height: 30px; margin-top: 16px; display: flex; align-items: center; justify-content: flex-end; padding-right: 10px; color: #6b6e74; font-size: 23.500px; }
.meta .ico { margin-right: 17px; }
.meta .ico + .ico { margin-right: 16px; }
.decided { height: 40px; margin-top: 43px; display: flex; align-items: center; padding: 0 16px 0 11px; color: #55585e; font-size: 28px; }
.decided span { margin-left: 14px; }

/* composer */
.composer { margin-top: 50px; margin-left: 1px; margin-right: 1px; }
.status { height: 57px; background: #d4cdfd; border: 2px solid #a99bf5; border-bottom: 0; border-radius: 18px 18px 0 0; display: flex; align-items: center; padding: 0 18px 0 15px; color: #5a48d8; }
.status-text { margin-left: 12px; font-size: 28.300px; }
.pause { margin-left: auto; display: flex; align-items: center; font-size: 23.500px; }
.pause-bars { width: 11px; height: 18px; border-left: 2px solid #5a48d8; border-right: 2px solid #5a48d8; margin-right: 17px; }
.input-box { height: 145px; background: #f0f1f3; border: 2px solid #b0b0b0; padding: 20px 0 0 11px; }
.placeholder { height: 36px; line-height: 36px; margin-left: 9px; color: #6b6e74; font-size: 28px; }
.input-tools { display: flex; align-items: center; margin-top: 29px; }
.pill { height: 52px; background: #e5e6e8; border-radius: 12px; display: flex; align-items: center; flex: none; }
.pill--build { width: 159px; padding-left: 12px; font-size: 25px; }
.pill--build span { margin-left: 10px; }
.ico--up { margin-left: 22px; }
.ico--select { margin-left: 19px; }
.ico--tool + .ico--tool { margin-left: 27px; }
.pill--chip { width: 95px; padding-left: 12px; margin-left: 120px; }
.pill--brain { width: 95px; padding-left: 12px; margin-left: 9px; }
.ico--closex { margin-left: 15px; stroke: #6b6e74; }
.ico--sliders { margin-left: 18px; }
.ico--send { margin-left: 38px; stroke: #5f6368; }

.splitter { width: 10px; flex: none; display: flex; align-items: center; }
.splitter i { display: block; width: 3px; height: 48px; margin-left: 2px; margin-top: -530px; background: #d9dadd; border-radius: 2px; }

/* preview */
.main { width: 1994px; flex: none; display: flex; flex-direction: column; border: 2px solid #9b8cff; border-bottom: 0; border-radius: 12px 12px 0 0; background: #fff; overflow: hidden; }
.tabs--main { height: 62px; padding-right: 28px; }
.tab--preview { width: 207px; height: 60px; align-self: flex-start; padding-left: 11px; gap: 13px; border-top: 2px solid #4a7cff; }
.tab--console { width: 209px; height: 60px; align-self: flex-start; background: #eff1f0; border-left: 2px solid #d3d4d6; border-right: 2px solid #e0e1e3; padding-left: 14px; gap: 14px; color: #6b6e74; }
.ico--newtab2 { margin-left: 23px; }
.ico-kebab { margin-left: auto; fill: #55585e; }
.url-row { height: 73px; flex: none; background: #fcfcfc; border-bottom: 3px solid #d3d4d6; display: flex; align-items: center; padding-bottom: 2px; padding-left: 20px; }
.ico--nav2 { margin-left: 32px; stroke: #55585e; }
.ico--nav3 { margin-left: 30px; }
.url-box { width: 1649px; height: 48px; margin-left: 15px; flex: none; background: #f0f1f3; border-radius: 10px; display: flex; align-items: center; padding: 2px 0 0 8px; font-size: 25.800px; }
.ico--link { stroke: #8a8d92; margin-right: 6px; }
.url-host { color: #55585e; }
.url-path { color: #15171b; }
.ico--urlt { margin-left: 17px; }
.ico--urlt2 { margin-left: 23px; }
.ico--urlt3 { margin-left: 22px; }

.viewport { flex: 1; position: relative; overflow: hidden; background: #fff; }
.page { padding: 492px 16px 0 15px; width: 1978px; font-family: "Liberation Serif", serif; color: #000; font-size: 32px; text-align: center; }
.page-title { margin: 0 0 39px; font-size: 48px; line-height: 55px; font-weight: 700; }
.page-sub { line-height: 37px; margin-bottom: 31px; }
.login { text-align: left; }
.label { line-height: 37px; height: 37px; }
.field { width: 1958px; height: 39px; border: 2px solid #767676; background: #fff; font: 26.670px/35px "Liberation Sans", sans-serif; padding-left: 3px; position: relative; }
.caret { display: inline-block; width: 1px; height: 30px; background: #000; vertical-align: -6px; }
.eye { position: absolute; right: 11px; top: 4px; fill: none; stroke: #000; stroke-width: 2.500; stroke-linecap: round; }
.btn { display: block; width: 100%; font: 26.670px/30px "Liberation Sans", sans-serif; color: #000; background: #efefef; padding: 0; text-align: center; }
.btn--primary { height: 39px; border: 0; padding-bottom: 2px; }
.or { text-align: center; line-height: 37px; height: 37px; }
.btn--outline { height: 42px; border: 2px solid #767676; border-radius: 4px; }
.btn--demo { height: 44px; border-top-width: 3px; }
.note { line-height: 37px; margin-top: 33px; }
.note--first { margin-top: 31px; }
.toast { position: absolute; left: 1667px; top: 30px; width: 276px; height: 90px; background: #363636; border-radius: 14px; box-shadow: 0 6px 14px rgba(0,0,0,.22); display: flex; align-items: center; padding-left: 20px; color: #fff; font: 32px "Liberation Serif", serif; }
.toast span { margin-left: 20px; }
.toast-ico { flex: none; }
.scrollbar { position: absolute; top: 0; right: 0; bottom: 0; width: 14px; background: #c9cad0; border-radius: 7px 0 0 0; }

/* taskbar */
.taskbar { height: 96px; flex: none; position: relative; z-index: 2; background: #eeeeee; border-top: 2px solid #bdbdbd; display: grid; grid-template-columns: 780px 1320px 1fr; }
.widget { padding: 12px 0 0 38px; }
.badge-num { fill: #fff; font: 500 23px Roboto, sans-serif; text-anchor: middle; }
.m365 { fill: #fff; font: 700 13px "DejaVu Sans Mono", monospace; text-anchor: middle; }
.gh-disc { fill: #fff; }
.gh-dark { fill: #24292f; }
.dock { display: flex; height: 94px; }
.dock-item { position: relative; width: 88px; flex: none; height: 94px; display: flex; align-items: center; justify-content: center; padding-bottom: 6px; }
.dock-tall { margin-top: -14px; }
.dock-item--open::after, .dock-item--active::after { content: ""; position: absolute; left: 38px; bottom: 8px; width: 12px; height: 5px; border-radius: 3px; background: #8a8a8a; }
.dock-item--active::before { content: ""; position: absolute; left: 6px; top: 7px; bottom: 6px; width: 76px; background: #f7f7f7; border-radius: 8px; box-shadow: 0 1px 2px rgba(0,0,0,.18); }
.dock-item--active svg { position: relative; }
.dock-item--active::after { left: 28px; width: 32px; background: #0078d4; z-index: 1; }
.tray { display: flex; align-items: center; justify-content: flex-end; padding-right: 40px; color: #1a1a1a; }
.tray-ico { fill: none; stroke: #1a1a1a; stroke-width: 2.200; stroke-linecap: round; stroke-linejoin: round; flex: none; overflow: visible; }
.tray-dot, .tray-fill { fill: #1a1a1a; stroke: none; }
.tray-cloud { margin-left: 32px; flex: none; }
.tray-lang { margin-left: 35px; font: 24px "Open Sans", sans-serif; }
.tray-wifi { margin-left: 35px; }
.tray-vol { margin-left: 17px; }
.tray-batt { margin-left: 14px; }
.clock { margin-left: 31px; text-align: right; font: 23px/32px "Open Sans", sans-serif; white-space: nowrap; }
```
